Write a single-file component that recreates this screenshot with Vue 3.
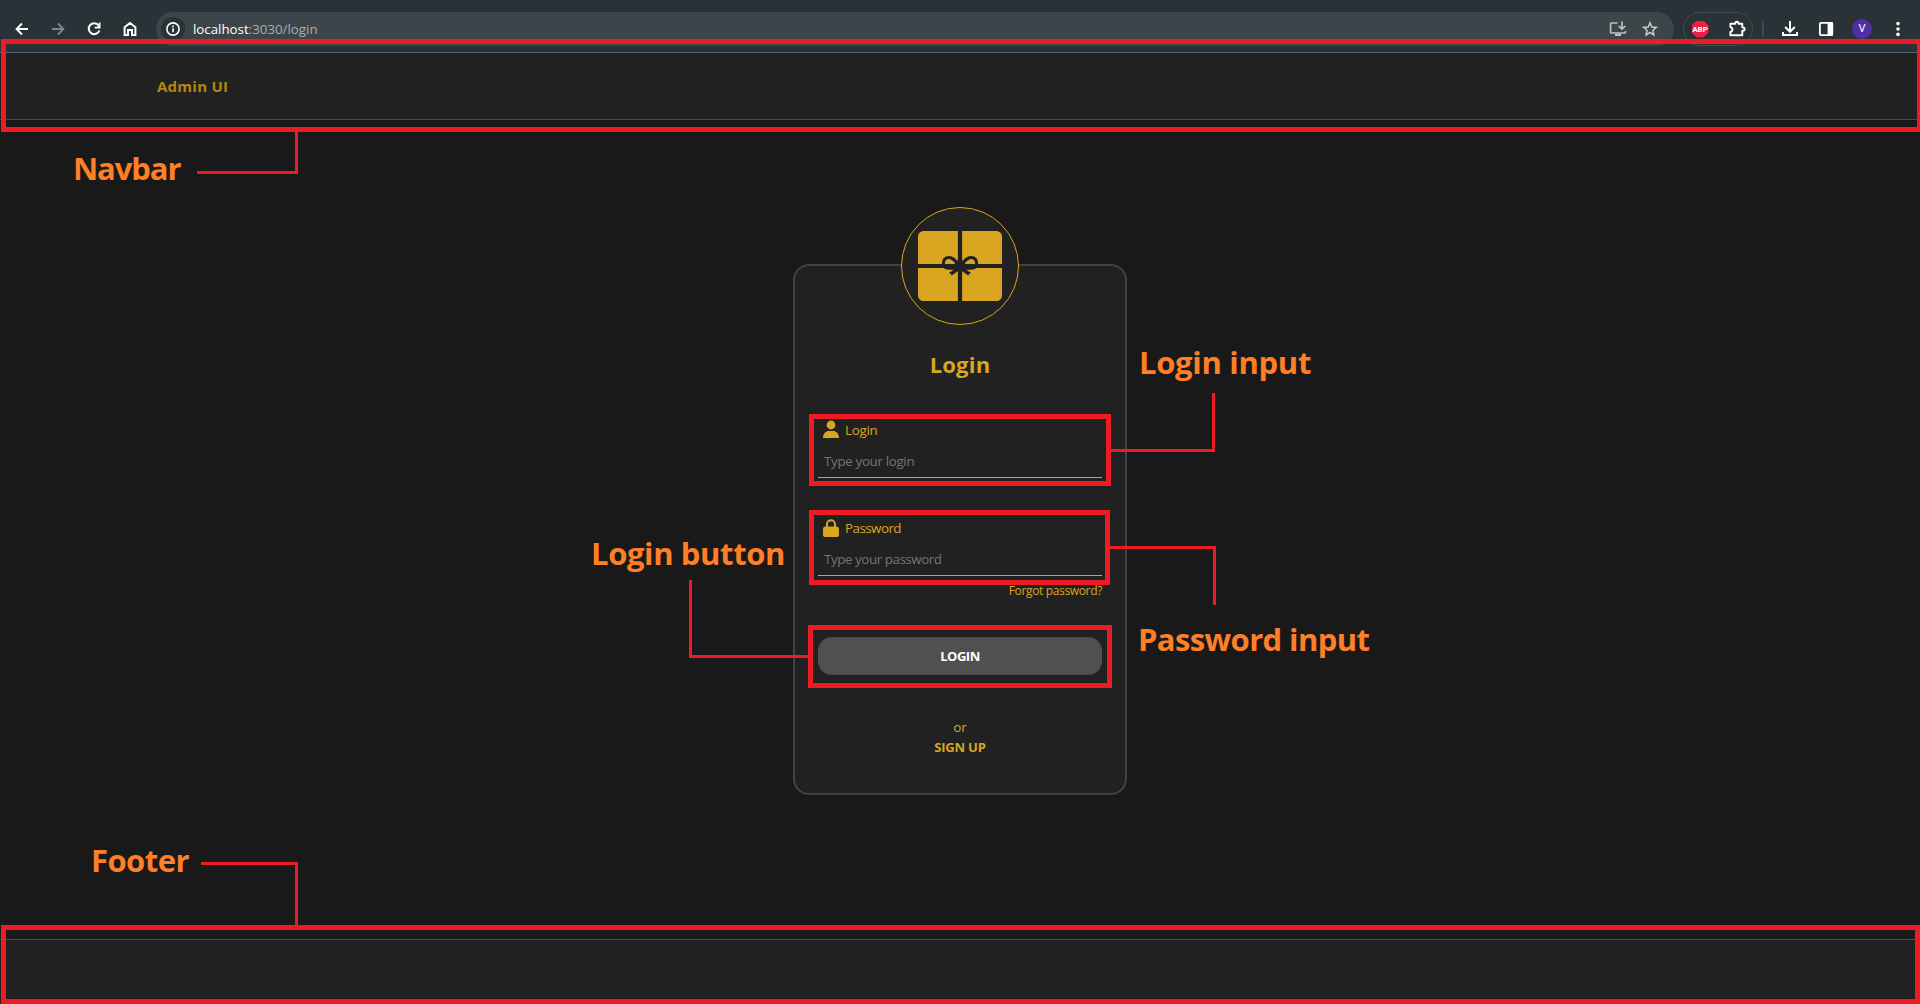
<script setup>
import { ref } from 'vue'

const login = ref('')
const password = ref('')

const frames = [
  { x: 1, y: 39, w: 1921, h: 93 },
  { x: 809, y: 414, w: 302, h: 72 },
  { x: 809, y: 510, w: 301, h: 75 },
  { x: 808, y: 625, w: 304, h: 63 },
  { x: 1, y: 925, w: 1919, h: 79 },
]

const connectors = [
  'M197 172.5H296.5V132',
  'M1111 450.5H1213.5V393',
  'M1110 547.5H1214.5V605',
  'M690.5 580V656.5H808',
  'M201 863.5H296.5V925',
]
</script>

<template>
  <div class="screen">
    <header class="browser">
      <div class="tools">
        <svg viewBox="0 0 20 20"><path d="M16 10H5M10 4.5L4.6 10L10 15.5" stroke="#fff" stroke-width="1.9" /></svg>
        <svg viewBox="0 0 20 20"><path d="M4 10H15M10 4.5L15.4 10L10 15.5" stroke="#7d868a" stroke-width="1.9" /></svg>
        <svg viewBox="0 0 20 20">
          <path d="M14.6 6.3A5.5 5.5 0 1 0 15.4 11.5" stroke="#fff" stroke-width="2" />
          <path d="M16.5 3.6V9.4H10.7V7.7H13.2L14.8 6.1V3.6Z" fill="#fff" />
        </svg>
        <svg viewBox="0 0 20 20"><path d="M4.6 15.9V8.2L10 4L15.4 8.2V15.9H12V11H8V15.9Z" stroke="#fff" stroke-width="2" /></svg>
      </div>
      <div class="omnibox">
        <span class="site-info">
          <svg viewBox="0 0 20 20">
            <circle cx="10" cy="10" r="6.1" stroke="#fff" stroke-width="1.6" />
            <path d="M10 9.2V13.2M10 6.6V8.2" stroke="#fff" stroke-width="1.6" />
          </svg>
        </span>
        <span class="url"><b>localhost</b>:3030/login</span>
        <svg viewBox="0 0 20 20">
          <path d="M9.5 4H3.2Q2.6 4 2.6 4.6V13.4Q2.6 14 3.2 14H16.8Q17.4 14 17.4 13.4V12" stroke="#bcc0c2" stroke-width="1.7" />
          <path d="M7 14.5H13V17H7Z" fill="#bcc0c2" />
          <path d="M14 2.6V10M10.8 7L14 10.1L17.3 7" stroke="#bcc0c2" stroke-width="1.7" />
        </svg>
        <svg viewBox="0 0 20 20"><path d="M10 3.8L11.8 8L16.3 8.4L12.9 11.4L13.9 15.9L10 13.5L6.1 15.9L7.1 11.4L3.7 8.4L8.2 8Z" stroke="#c8cbcc" stroke-width="1.5" /></svg>
      </div>
      <div class="extensions">
        <span class="abp">ABP</span>
        <svg viewBox="0 0 20 20">
          <path d="M3.4 4.8H8.3V4.3A1.6 1.6 0 0 1 11.5 4.3V4.8H15.3V8.4H15.9A1.7 1.7 0 0 1 15.9 11.8H15.3V16.2H3.4V13A2.5 2.5 0 0 0 3.4 8.1Z" stroke="#fff" stroke-width="1.9" stroke-linejoin="round" />
        </svg>
      </div>
      <span class="divider"></span>
      <div class="tools tools-right">
        <svg viewBox="0 0 20 20"><path d="M10 2V12.5M5.2 8L10 12.8L14.8 8M3 13V16H17V13" stroke="#fff" stroke-width="2" /></svg>
        <svg viewBox="0 0 20 20">
          <rect x="3.9" y="3.9" width="12.4" height="12.2" rx="1" stroke="#fff" stroke-width="1.8" />
          <path d="M11.6 3.5H17V16.5H11.6Z" fill="#fff" />
        </svg>
        <span class="avatar">V</span>
        <svg viewBox="0 0 20 20">
          <g fill="#fff"><circle cx="10" cy="4.6" r="1.8" /><circle cx="10" cy="10" r="1.8" /><circle cx="10" cy="15.4" r="1.8" /></g>
        </svg>
      </div>
    </header>

    <nav class="navbar"><a class="brand">Admin UI</a></nav>

    <main class="content">
      <form class="card" @submit.prevent>
        <div class="badge">
          <svg class="gift" viewBox="0 0 84 70">
            <rect width="84" height="70" rx="5.5" fill="#daa520" />
            <g stroke="#212121">
              <path d="M42 0V70M0 35H84" stroke-width="4.2" />
              <path d="M42 34.5C37 29 34.5 26.4 31 26.4C27.4 26.4 25.4 29 25.4 33C25.4 36.2 27 37.2 31 37.2H42M42 34.5C47 29 49.5 26.4 53 26.4C56.6 26.4 58.6 29 58.6 33C58.6 36.2 57 37.2 53 37.2H42" stroke-width="3" />
              <path d="M42 36.5L33.4 42.4M42 36.5L50.6 42.4" stroke-width="3.6" />
            </g>
            <path d="M31 41L34.2 45L33.6 41ZM53 41L49.8 45L50.4 41ZM36.5 31.5H47.5L46 40H38Z" fill="#212121" />
          </svg>
        </div>
        <h1 class="title">Login</h1>

        <div class="field">
          <label class="field-label" for="login">
            <svg viewBox="0 0 16 18">
              <g fill="#daa520"><circle cx="8" cy="5" r="4.4" /><path d="M0 18C0 13.5 3 11 6 11H10C13 11 16 13.5 16 18Z" /></g>
            </svg>
            <span class="t-login">Login</span>
          </label>
          <input id="login" v-model="login" class="in-login" type="text" placeholder="Type your login" />
        </div>
        <div class="field">
          <label class="field-label" for="password">
            <svg class="lock" viewBox="0 0 16 18">
              <path d="M4 9V5.2A4 4 0 0 1 12 5.2V9" stroke="#daa520" stroke-width="2" />
              <rect y="7.4" width="16" height="10.6" rx="2.6" fill="#daa520" />
            </svg>
            <span class="t-password">Password</span>
          </label>
          <input id="password" v-model="password" class="in-password" type="password" placeholder="Type your password" />
        </div>
        <a class="forgot">Forgot password?</a>
        <button class="submit">LOGIN</button>
        <span class="or">or</span>
        <a class="signup">SIGN UP</a>
      </form>
    </main>

    <footer class="footer"></footer>

    <svg class="markup" viewBox="0 0 1920 1004">
      <rect v-for="f in frames" :key="f.y" :x="f.x + 2.5" :y="f.y + 2.5" :width="f.w - 5" :height="f.h - 5" stroke-width="5" />
      <path v-for="c in connectors" :key="c" :d="c" stroke-width="3" />
    </svg>
    <span class="note note-navbar">Navbar</span>
    <span class="note note-login">Login input</span>
    <span class="note note-password">Password input</span>
    <span class="note note-button">Login button</span>
    <span class="note note-footer">Footer</span>
  </div>
</template>

<style>
body {
  background: #191919;
}
</style>

<style scoped>
.screen {
  position: relative;
  display: flex;
  flex-direction: column;
  width: 1920px;
  height: 1004px;
  overflow: hidden;
  background: #191919;
  font-family: "Open Sans", "Noto Sans", sans-serif;
  color: #daa520;
}
.screen * {
  box-sizing: border-box;
}
svg {
  display: block;
  flex: none;
  fill: none;
}
.browser {
  display: flex;
  align-items: center;
  flex: none;
  height: 53px;
  padding: 6px 12px 0;
  background: #283237;
  border-bottom: 1px solid #56646b;
}
.tools {
  display: flex;
  align-items: center;
  gap: 16px;
}
.tools svg,
.omnibox svg,
.extensions svg {
  width: 20px;
  height: 20px;
}
.omnibox {
  display: flex;
  align-items: center;
  flex: 1;
  height: 34px;
  margin-left: 16px;
  padding: 0 14px 0 5px;
  gap: 12px;
  border-radius: 17px;
  background: #3b454a;
}
.site-info {
  display: flex;
  align-items: center;
  justify-content: center;
  width: 24px;
  height: 24px;
  border-radius: 50%;
  background: #283237;
}
.url {
  flex: 1;
  margin-left: -4px;
  font-size: 13.3px;
  line-height: 20px;
  color: #a9afb2;
}
.url b {
  font-weight: 400;
  color: #fff;
}
.extensions {
  display: flex;
  align-items: center;
  gap: 18px;
  width: 70px;
  height: 34px;
  margin-left: 9px;
  padding-left: 7.5px;
  border: 1px solid #414b50;
  border-radius: 17px;
}
.abp {
  width: 17px;
  height: 17px;
  background: #ed1e45;
  clip-path: polygon(30% 0, 70% 0, 100% 30%, 100% 70%, 70% 100%, 30% 100%, 0 70%, 0 30%);
  font: 700 8px/17px Roboto, sans-serif;
  text-align: center;
  color: #fff;
}
.divider {
  width: 2px;
  height: 16px;
  margin: 0 16px 0 9px;
  background: #3b4950;
}
.avatar {
  width: 20px;
  height: 20px;
  border-radius: 50%;
  background: #512da8;
  font: 400 11px/20px Roboto, sans-serif;
  text-align: center;
  color: #fff;
}
.navbar {
  flex: none;
  height: 67px;
  padding-left: 157px;
  background: #212121;
  border-bottom: 1px solid #4a4a4a;
}
.brand {
  font-size: 15px;
  font-weight: 700;
  line-height: 66px;
  letter-spacing: 0.25px;
  color: #b8860b;
}
.content {
  flex: 1;
  display: flex;
  justify-content: center;
  align-items: flex-start;
  padding-top: 144px;
}
.card {
  display: flex;
  flex-direction: column;
  width: 334px;
  height: 531px;
  padding: 0 23px;
  border: 2px solid #424242;
  border-radius: 16px;
  background: #212121;
}
.badge {
  display: flex;
  align-items: center;
  justify-content: center;
  align-self: center;
  flex: none;
  width: 118px;
  height: 118px;
  margin-top: -59px;
  border: 1px solid #daa520;
  border-radius: 50%;
  background: #212121;
}
.gift {
  width: 84px;
  height: 70px;
}
.title {
  margin: 24px 0 41px;
  font-size: 22px;
  font-weight: 700;
  line-height: 30px;
  letter-spacing: 0.2px;
  text-align: center;
}
.field {
  display: flex;
  flex-direction: column;
}
.field + .field {
  margin-top: 40px;
}
.field-label {
  display: flex;
  align-items: center;
  gap: 6px;
  height: 20px;
  padding-left: 5px;
  font-size: 13.4px;
  line-height: 20px;
}
.field-label svg {
  width: 16px;
  height: 18px;
  margin-top: -2px;
}
.field-label .lock {
  margin-top: 0;
}
.t-login {
  letter-spacing: -0.3px;
}
.t-password {
  letter-spacing: -0.55px;
}
input {
  height: 38px;
  padding: 4px 6px 0;
  border: 0;
  border-bottom: 1px solid #daa520;
  border-radius: 0;
  outline: 0;
  background: none;
  font: 400 13.4px "Open Sans", sans-serif;
  color: #daa520;
}
input::placeholder {
  color: #757575;
}
.in-login {
  letter-spacing: -0.35px;
}
.in-password {
  letter-spacing: -0.45px;
}
.forgot {
  margin-top: 6px;
  font-size: 12px;
  line-height: 18px;
  letter-spacing: -0.35px;
  text-align: right;
}
.submit {
  height: 38px;
  margin-top: 37px;
  padding: 0;
  border: 0;
  border-radius: 14px;
  background: #505050;
  font: 700 13px/38px "Open Sans", sans-serif;
  letter-spacing: -0.5px;
  color: #fff;
}
.or {
  margin-top: 42px;
  font-size: 13.4px;
  line-height: 20px;
  text-align: center;
}
.signup {
  font-size: 13px;
  font-weight: 700;
  line-height: 20px;
  letter-spacing: -0.2px;
  text-align: center;
}
.footer {
  flex: none;
  height: 65px;
  background: #212121;
  border-top: 1px solid #4a4a4a;
}
.markup {
  position: absolute;
  inset: 0;
  width: 1920px;
  height: 1004px;
  stroke: #ed1c24;
  pointer-events: none;
}
.note {
  position: absolute;
  font-size: 31px;
  font-weight: 700;
  line-height: 40px;
  white-space: nowrap;
  color: #ff7f27;
}
.note-navbar {
  left: 73px;
  top: 148px;
  letter-spacing: -1.1px;
}
.note-login {
  left: 1139px;
  top: 342px;
  letter-spacing: -0.3px;
}
.note-password {
  left: 1138px;
  top: 619px;
  letter-spacing: -0.6px;
}
.note-button {
  left: 591px;
  top: 533px;
  letter-spacing: -0.38px;
}
.note-footer {
  left: 91px;
  top: 840px;
  letter-spacing: -0.55px;
}
</style>
